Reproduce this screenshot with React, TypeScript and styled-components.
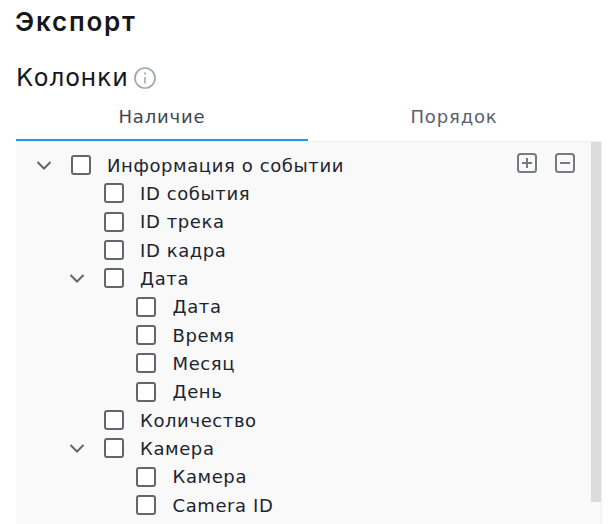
import React from "react";
import styled, { createGlobalStyle } from "styled-components";

const Global = createGlobalStyle`
  html, body { margin: 0; padding: 0; background: #fff; overflow: hidden; }
  body { font-family: "DejaVu Sans", Inter, sans-serif; }
`;

const Page = styled.div`
  width: 614px;
  height: 524px;
  overflow: hidden;
  padding: 0 12px 0 15px;
  box-sizing: border-box;
`;
const Title = styled.h1`
  margin: 0;
  padding-top: 5px;
  height: 58px;
  box-sizing: border-box;
  font-family: Inter, sans-serif;
  font-size: 26px;
  line-height: 33px;
  font-weight: 600;
  letter-spacing: 1.8px;
  color: #14171c;
`;
const SectionHead = styled.div`
  display: flex;
  align-items: center;
  gap: 5px;
  height: 40px;
  padding: 0 0 0 1px;
`;
const SectionTitle = styled.h2`
  margin: 0;
  font-size: 24px;
  font-weight: 400;
  letter-spacing: 0.7px;
  color: #14171c;
`;
const Tabs = styled.div`
  display: flex;
  margin-left: 1px;
  height: 43px;
  width: 586px;
`;
const Tab = styled.div<{ $active?: boolean }>`
  flex: 0 0 292px;
  height: 43px;
  display: flex;
  justify-content: center;
  align-items: center;
  padding: 0 0 4px;
  box-sizing: border-box;
  font-size: 18px;
  letter-spacing: 0.85px;
  color: ${(p) => (p.$active ? "#3f4650" : "#59616b")};
  border-bottom: 2px solid ${(p) => (p.$active ? "#2196f3" : "transparent")};
`;
const Panel = styled.div`
  position: relative;
  margin-left: 1px;
  width: 586px;
  height: 400px;
  background: #f9f9f9;
  border-top: 1px solid #efefef;
  border-right: 1px solid #efefef;
  box-sizing: border-box;
  padding-top: 9px;
`;
const Scrollbar = styled.div`
  position: absolute;
  top: 0;
  right: 0;
  width: 10px;
  height: 360px;
  background: #dcdcdc;
`;
const Row = styled.div<{ $level: number }>`
  display: flex;
  align-items: center;
  height: 28.33px;
  padding-left: ${(p) => 16 + p.$level * 32.5}px;
`;
const Chevron = styled.div`
  width: 24px;
  height: 24px;
  flex: none;
  color: #5f6670;
`;
const Spacer = styled.div`
  width: 24px;
  flex: none;
`;
const Box = styled.div`
  width: 16px;
  height: 16px;
  margin-left: 15px;
  flex: none;
  border: 2px solid #63676d;
  border-radius: 3px;
  background: #fff;
`;
const Label = styled.span<{ $top?: boolean }>`
  margin-left: ${(p) => (p.$top ? "16px" : "16.5px")};
  font-size: 18px;
  letter-spacing: 0.6px;
  color: #1c2430;
  white-space: nowrap;
`;
const Actions = styled.div`
  position: absolute;
  top: 10px;
  right: 25px;
  display: flex;
  gap: 16px;
`;

const Info = () => (
  <svg width="24" height="24" viewBox="0 0 24 24" fill="none" stroke="#a3a7ac" strokeWidth="1.7">
    <circle cx="12" cy="12" r="10" />
    <path d="M12 11v6.5" strokeWidth="1.6" />
    <path d="M12 6.6v1.8" strokeWidth="1.8" />
  </svg>
);
const Chev = () => (
  <svg width="24" height="24" viewBox="0 0 24 24" fill="none" stroke="currentColor" strokeWidth="2">
    <path d="M5.5 9l6.5 6.5L18.500 9" />
  </svg>
);
const Square = ({ plus }: { plus?: boolean }) => (
  <svg width="22" height="22" viewBox="0 0 22 22" fill="none" stroke="#767b82" strokeWidth="2">
    <rect x="2" y="2" width="18" height="18" rx="2.5" />
    <path d="M6 11h10" />
    {plus && <path d="M11 6v10" />}
  </svg>
);

const rows: { level: number; label: string; open?: boolean }[] = [
  { level: 0, label: "Информация о событии", open: true },
  { level: 1, label: "ID события" },
  { level: 1, label: "ID трека" },
  { level: 1, label: "ID кадра" },
  { level: 1, label: "Дата", open: true },
  { level: 2, label: "Дата" },
  { level: 2, label: "Время" },
  { level: 2, label: "Месяц" },
  { level: 2, label: "День" },
  { level: 1, label: "Количество" },
  { level: 1, label: "Камера", open: true },
  { level: 2, label: "Камера" },
  { level: 2, label: "Camera ID" },
];

export default function App() {
  return (
    <Page>
      <Global />
      <Title>Экспорт</Title>
      <SectionHead>
        <SectionTitle>Колонки</SectionTitle>
        <Info />
      </SectionHead>
      <Tabs>
        <Tab $active>Наличие</Tab>
        <Tab>Порядок</Tab>
      </Tabs>
      <Panel>
        <Scrollbar />
        <Actions>
          <Square plus />
          <Square />
        </Actions>
        {rows.map((r, i) => (
          <Row key={i} $level={r.level}>
            {r.open ? <Chevron><Chev /></Chevron> : <Spacer />}
            <Box />
            <Label $top={r.level === 0}>{r.label}</Label>
          </Row>
        ))}
      </Panel>
    </Page>
  );
}
